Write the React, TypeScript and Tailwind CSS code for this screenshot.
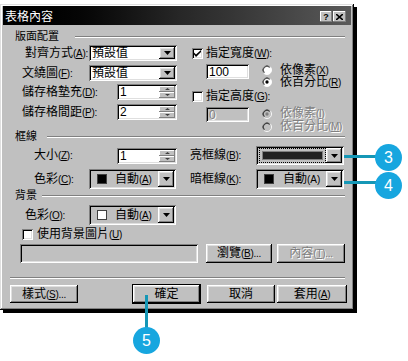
import React from "react";

const raised =
  "shadow-[inset_-1px_-1px_#000,inset_1px_1px_#fff,inset_-2px_-2px_#808080,inset_2px_2px_#dfdfdf]";
const thinRaised = "shadow-[inset_-1px_-1px_#808080,inset_1px_1px_#fff]";
const sunken =
  "shadow-[inset_1px_1px_#808080,inset_-1px_-1px_#fff,inset_2px_2px_#000,inset_-2px_-2px_#dfdfdf]";
const dim = "text-[#808080] [text-shadow:1px_1px_0_#fff]";

// label with accelerator key, e.g. 對齊方式(A):
function L({ t, k, colon, tail }: { t: string; k?: string; colon?: boolean; tail?: string }) {
  return (
    <span>
      {t}
      <span className="text-[10px] tracking-[-0.3px]">
        {k && (
          <>
            (<span className="underline underline-offset-1">{k}</span>)
          </>
        )}
        {colon ? ":" : ""}
        {tail}
      </span>
    </span>
  );
}

function ArrowBtn() {
  return (
    <div className={`flex w-[16px] shrink-0 items-center justify-center bg-[#c0c0c0] ${raised}`}>
      <svg width="7" height="4" viewBox="0 0 7 4">
        <path d="M0 0h7L3.5 4z" fill="#000" />
      </svg>
    </div>
  );
}

function Combo({
  className,
  white,
  children,
}: {
  className: string;
  white?: boolean;
  children: React.ReactNode;
}) {
  return (
    <div className={`flex p-[2px] ${sunken} ${white ? "bg-white" : "bg-[#c0c0c0]"} ${className}`}>
      <div className="flex min-w-0 flex-1 items-center">{children}</div>
      <ArrowBtn />
    </div>
  );
}

function Spin({ value }: { value: string }) {
  return (
    <div className={`flex h-[16px] w-[60px] bg-white p-[2px] ${sunken}`}>
      <div className="flex flex-1 items-center pl-[1px]">{value}</div>
      <div className="flex w-[16px] flex-col">
        <div className={`flex flex-1 items-center justify-center bg-[#c0c0c0] ${thinRaised}`}>
          <svg width="5" height="2" viewBox="0 0 5 2">
            <path d="M0 2h5L2.5 0z" fill="#404040" />
          </svg>
        </div>
        <div className={`flex flex-1 items-center justify-center bg-[#c0c0c0] ${thinRaised}`}>
          <svg width="5" height="2" viewBox="0 0 5 2">
            <path d="M0 0h5L2.5 2z" fill="#404040" />
          </svg>
        </div>
      </div>
    </div>
  );
}

function Check({ on }: { on?: boolean }) {
  return (
    <div className={`flex h-[11px] w-[11px] shrink-0 items-center justify-center bg-white ${sunken}`}>
      {on && (
        <svg width="7" height="7" viewBox="0 0 7 7">
          <path d="M0 2.5l2 2L7 0v2L2 7 0 4.5z" fill="#000" />
        </svg>
      )}
    </div>
  );
}

function Radio({ on, disabled }: { on?: boolean; disabled?: boolean }) {
  return (
    <svg width="10" height="10" viewBox="0 0 12 12" className="shrink-0">
      <circle cx="6" cy="6" r="5.5" fill={disabled ? "#c0c0c0" : "#fff"} stroke="#fff" />
      <path d="M2.1 9.9A5.5 5.5 0 0 1 9.9 2.1" stroke="#808080" fill="none" />
      <path d="M2.8 9.2A4.5 4.5 0 0 1 9.2 2.8" stroke="#000" fill="none" />
      {on && <circle cx="6" cy="6" r="2" fill={disabled ? "#808080" : "#000"} />}
    </svg>
  );
}

function GroupHead({ label, labelW, h }: { label: string; labelW: string; h: string }) {
  return (
    <div className={`flex items-center ${h}`}>
      <span className={`pl-[15px] text-[11px] ${labelW}`}>{label}</span>
      <div className="mr-[9px] mt-[2px] h-[2px] flex-1 border-t border-b border-t-[#808080] border-b-white" />
    </div>
  );
}

function Btn({ className, children, def }: { className: string; children: React.ReactNode; def?: boolean }) {
  return (
    <div
      className={`flex items-center justify-center bg-[#c0c0c0] ${raised} ${
        def ? "outline outline-1 outline-black" : ""
      } ${className}`}
    >
      {children}
    </div>
  );
}

function Swatch({ color }: { color: string }) {
  return <div className={`h-[10px] w-[10px] shrink-0 border border-[#404040] ${color}`} />;
}

export default function App() {
  return (
    <div className="relative h-[361px] w-[408px] overflow-hidden whitespace-nowrap bg-white font-['Liberation_Sans','Noto_Sans_CJK_TC',sans-serif] text-[12px] leading-[12px] text-black">
      <div className="mt-[4px] flex h-[306px] w-[354px] flex-col bg-[#c0c0c0] pt-[2px] shadow-[inset_-1px_-1px_#000,inset_1px_1px_#dfdfdf,inset_-2px_-2px_#808080,inset_2px_2px_#fff,3px_3px_0_#000]">
        {/* Title bar */}
        <div className="mx-[3px] flex h-[19px] items-center justify-between bg-gradient-to-r from-black via-[#262626] to-[#5a5a5a] pl-[2px] pr-[5px] pt-[2px]">
          <span className="text-white">表格內容</span>
          <div className="flex gap-[1px]">
            <div className={`flex h-[11px] w-[12px] items-center justify-center bg-[#c0c0c0] text-[9px] font-bold ${thinRaised}`}>
              ?
            </div>
            <div className={`flex h-[11px] w-[13px] items-center justify-center bg-[#c0c0c0] ${thinRaised}`}>
              <svg width="7" height="6" viewBox="0 0 7 6">
                <path d="M0 0l7 6M7 0L0 6" stroke="#000" strokeWidth="1.6" />
              </svg>
            </div>
          </div>
        </div>

        {/* 版面配置 */}
        <div className="mt-[4px]">
          <GroupHead label="版面配置" labelW="w-[75px]" h="h-[14px]" />
        </div>
        <div className="mt-[2px] flex h-[84px] items-start">
          <div className="flex w-[190px] shrink-0 flex-col">
            <div className="flex h-[16px] items-center">
              <span className="w-[89px] pl-[25px]">
                <L t="對齊方式" k="A" colon />
              </span>
              <Combo className="h-[16px] w-[88px]" white>
                <span className="pl-[1px]">預設值</span>
              </Combo>
            </div>
            <div className="mt-[4px] flex h-[16px] items-center">
              <span className="w-[89px] pl-[22px]">
                <L t="文繞圖" k="F" colon />
              </span>
              <Combo className="h-[16px] w-[88px]" white>
                <span className="pl-[1px]">預設值</span>
              </Combo>
            </div>
            <div className="mt-[3px] flex h-[16px] items-center">
              <span className="w-[117px] pl-[22px]">
                <L t="儲存格墊充" k="D" colon />
              </span>
              <Spin value="1" />
            </div>
            <div className="mt-[4px] flex h-[16px] items-center">
              <span className="w-[117px] pl-[22px]">
                <L t="儲存格間距" k="P" colon />
              </span>
              <Spin value="2" />
            </div>
          </div>

          <div className="flex flex-col">
            <div className="flex h-[16px] shrink-0 items-center pl-[2px]">
              <Check on />
              <span className="pl-[3px]">
                <L t="指定寬度" k="W" colon />
              </span>
            </div>
            <div className="mt-[3px] flex h-[24px] shrink-0 items-start pl-[16px]">
              <div className={`flex h-[15px] w-[43px] items-center bg-white pl-[3px] ${sunken}`}>100</div>
              <div className="ml-[13px] flex flex-col leading-[10px]">
                <div className="flex h-[12px] items-center gap-[8px]">
                  <Radio />
                  <L t="依像素" k="X" />
                </div>
                <div className="flex h-[12px] items-center gap-[8px]">
                  <Radio on />
                  <L t="依百分比" k="R" />
                </div>
              </div>
            </div>
            <div className="mt-[1px] flex h-[14px] shrink-0 items-center pl-[2px]">
              <Check />
              <span className="pl-[3px]">
                <L t="指定高度" k="G" colon />
              </span>
            </div>
            <div className="mt-[4px] flex shrink-0 items-start pl-[16px]">
              <div className={`flex h-[15px] w-[43px] items-center bg-[#c0c0c0] pl-[3px] ${sunken} ${dim}`}>0</div>
              <div className="ml-[13px] flex flex-col leading-[10px]">
                <div className="flex h-[13px] items-center gap-[8px]">
                  <Radio on disabled />
                  <span className={dim}>
                    <L t="依像素" k="I" />
                  </span>
                </div>
                <div className="flex h-[13px] items-center gap-[8px]">
                  <Radio disabled />
                  <span className={dim}>
                    <L t="依百分比" k="M" />
                  </span>
                </div>
              </div>
            </div>
          </div>
        </div>

        {/* 框線 */}
        <GroupHead label="框線" labelW="w-[47px]" h="h-[14px]" />
        <div className="mt-[3px] flex h-[19px] items-center">
          <div className="flex w-[190px] shrink-0 items-center">
            <span className="w-[117px] pl-[34px]">
              <L t="大小" k="Z" colon />
            </span>
            <Spin value="1" />
          </div>
          <span className="w-[66px]">
            <L t="亮框線" k="B" colon />
          </span>
          <Combo className="h-[19px] w-[88px]">
            <div className="ml-[1px] flex h-[15px] flex-1 items-center border border-dotted border-black p-[2px]">
              <div className="h-full w-full border border-[#808080] bg-[#222]" />
            </div>
          </Combo>
        </div>
        <div className="mt-[4px] flex h-[20px] items-center">
          <div className="flex w-[190px] shrink-0 items-center">
            <span className="w-[89px] pl-[34px]">
              <L t="色彩" k="C" colon />
            </span>
            <Combo className="h-[20px] w-[87px]">
              <div className="ml-[6px] flex items-center gap-[8px]">
                <Swatch color="bg-black" />
                <L t="自動" k="A" />
              </div>
            </Combo>
          </div>
          <span className="w-[66px]">
            <L t="暗框線" k="K" colon />
          </span>
          <Combo className="h-[20px] w-[88px]">
            <div className="ml-[6px] flex items-center gap-[9px]">
              <Swatch color="bg-black" />
              <span>
                自動<span className="text-[10px]">(A)</span>
              </span>
            </div>
          </Combo>
        </div>

        {/* 背景 */}
        <GroupHead label="背景" labelW="w-[42px]" h="h-[12px]" />
        <div className="mt-[4px] flex h-[20px] items-center">
          <span className="w-[89px] pl-[25px]">
            <L t="色彩" k="O" colon />
          </span>
          <Combo className="h-[20px] w-[87px]">
            <div className="ml-[6px] flex items-center gap-[8px]">
              <Swatch color="bg-white" />
              <L t="自動" k="A" />
            </div>
          </Combo>
        </div>
        <div className="mt-[3px] flex h-[12px] items-center pl-[22px]">
          <Check />
          <span className="pl-[4px]">
            <L t="使用背景圖片" k="U" />
          </span>
        </div>
        <div className="mt-[4px] flex h-[19px] items-stretch">
          <div className={`ml-[20px] w-[178px] bg-[#c0c0c0] ${sunken}`} />
          <Btn className="ml-[8px] w-[66px]">
            <L t="瀏覽" k="B" tail="..." />
          </Btn>
          <Btn className="ml-[5px] w-[68px]">
            <span className={dim}>
              <L t="內容" k="T" tail="..." />
            </span>
          </Btn>
        </div>

        <div className="ml-[10px] mt-[14px] h-[2px] w-[335px] border-t border-b border-t-[#808080] border-b-white" />

        <div className="mt-[6px] flex h-[18px] items-stretch">
          <Btn className="ml-[10px] w-[68px]">
            <L t="樣式" k="S" tail="..." />
          </Btn>
          <Btn className="ml-[55px] w-[67px]" def>
            確定
          </Btn>
          <Btn className="ml-[7px] w-[68px]">取消</Btn>
          <Btn className="ml-[2px] w-[70px]">
            <L t="套用" k="A" />
          </Btn>
        </div>
      </div>

      {/* Callouts */}
      <div className="absolute left-[344px] top-[155px] h-[3px] w-[34px] bg-[#1597b6]" />
      <div className="absolute left-[375px] top-[144px] flex h-[27px] w-[27px] items-center justify-center rounded-full bg-[#17a6df] text-[16px] text-white">
        3
      </div>
      <div className="absolute left-[344px] top-[181px] h-[3px] w-[34px] bg-[#1597b6]" />
      <div className="absolute left-[375px] top-[172px] flex h-[27px] w-[27px] items-center justify-center rounded-full bg-[#17a6df] text-[16px] text-white">
        4
      </div>
      <div className="absolute left-[145px] top-[295px] h-[34px] w-[3px] bg-[#1597b6]" />
      <div className="absolute left-[133px] top-[327px] flex h-[27px] w-[27px] items-center justify-center rounded-full bg-[#17a6df] text-[16px] text-white">
        5
      </div>
    </div>
  );
}
